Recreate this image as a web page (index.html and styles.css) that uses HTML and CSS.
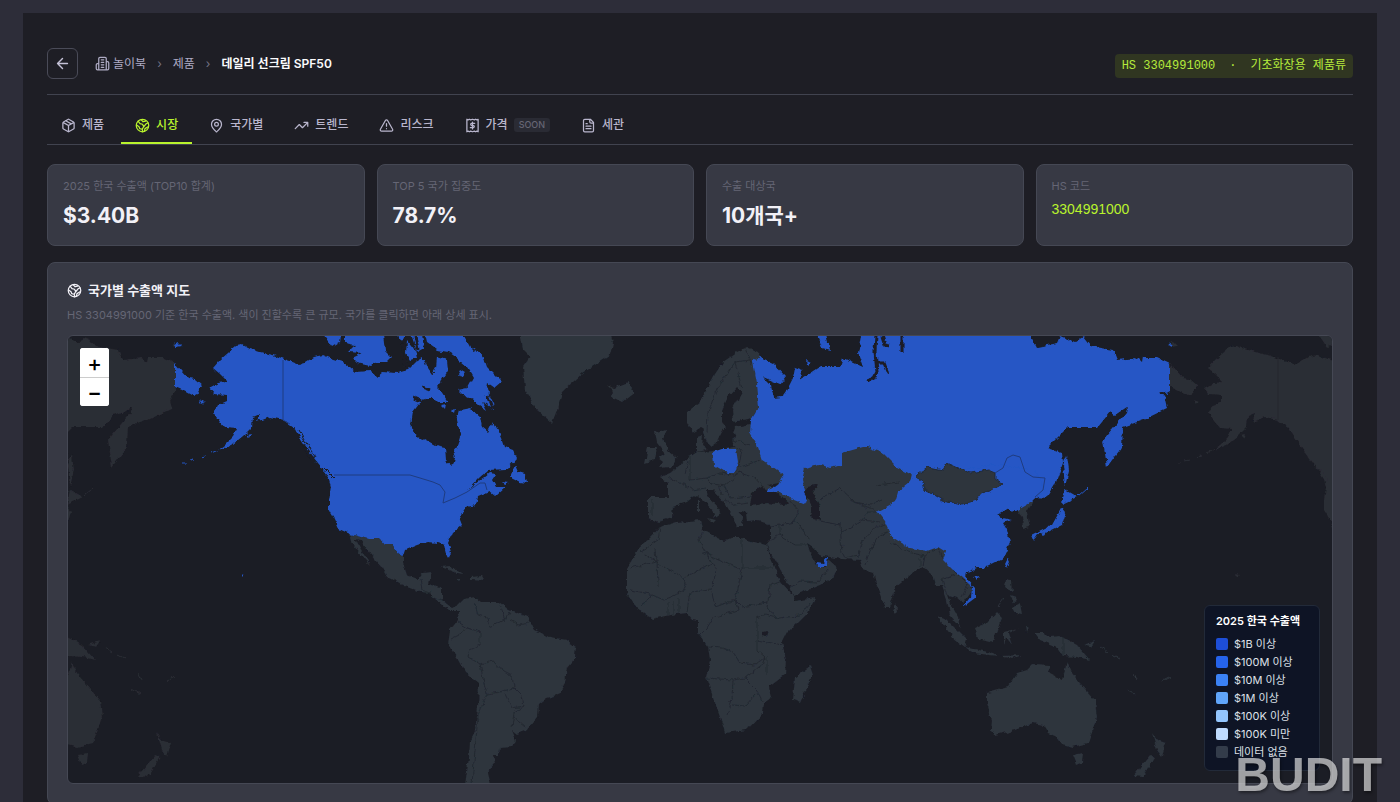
FILE: index.html
```html
<!DOCTYPE html>
<html lang="ko">
<head>
<meta charset="utf-8">
<meta name="viewport" content="width=device-width, initial-scale=1">
<title>데일리 선크림 SPF50 – 시장</title>
<link rel="stylesheet" href="styles.css">
</head>
<body>
<svg class="defs" aria-hidden="true">
  <symbol id="i-earth" viewBox="0 0 24 24"><circle cx="12" cy="12" r="10"/><path d="M5 5l3 4 4 1 2 4-2 3M14 14l4-5 3-1M10 3l3 3 4-1M2.500 11l4 3 1 3 4 1 1 4M15 21l1-4 5-3"/></symbol>
</svg>
<div class="page">
  <main class="shell">
    <header class="header">
      <button class="back" aria-label="뒤로"><svg class="icon" viewBox="0 0 24 24"><path d="M19 12H5M12 19l-7-7 7-7"/></svg></button>
      <nav class="crumbs" aria-label="경로">
        <a href="#" class="crumb"><svg class="icon" viewBox="0 0 24 24"><path d="M6 22V4a2 2 0 0 1 2-2h8a2 2 0 0 1 2 2v18ZM6 12H4a2 2 0 0 0-2 2v6a2 2 0 0 0 2 2h2M18 9h2a2 2 0 0 1 2 2v9a2 2 0 0 1-2 2h-2M10 6h4M10 10h4M10 14h4M10 18h4"/></svg>놀이북</a>
        <span class="sep">›</span>
        <a href="#" class="crumb">제품</a>
        <span class="sep">›</span>
        <span class="current">데일리 선크림 SPF50</span>
      </nav>
      <div class="hs-tag"><span>HS 3304991000</span> <span>·</span> <span>기초화장용 제품류</span></div>
    </header>

    <nav class="tabs" aria-label="제품 상세">
      <a href="#" class="tab"><svg class="icon" viewBox="0 0 24 24"><path d="M11 21.730a2 2 0 0 0 2 0l7-4A2 2 0 0 0 21 16V8a2 2 0 0 0-1-1.730l-7-4a2 2 0 0 0-2 0l-7 4A2 2 0 0 0 3 8v8a2 2 0 0 0 1 1.730zM12 22V12M3.290 7L12 12l8.710-5M7.500 4.270l9 5.150"/></svg>제품</a>
      <a href="#" class="tab active" aria-current="page"><svg class="icon"><use href="#i-earth"/></svg>시장</a>
      <a href="#" class="tab"><svg class="icon" viewBox="0 0 24 24"><path d="M20 10c0 5-5.500 10.200-7.400 11.800a1 1 0 0 1-1.200 0C9.500 20.200 4 15 4 10a8 8 0 0 1 16 0"/><circle cx="12" cy="10" r="3"/></svg>국가별</a>
      <a href="#" class="tab"><svg class="icon" viewBox="0 0 24 24"><path d="M22 7l-8.500 8.500-5-5L2 17M16 7h6v6"/></svg>트렌드</a>
      <a href="#" class="tab"><svg class="icon" viewBox="0 0 24 24"><path d="M21.730 18l-8-14a2 2 0 0 0-3.480 0l-8 14A2 2 0 0 0 4 21h16a2 2 0 0 0 1.730-3M12 9v4M12 17h.01"/></svg>리스크</a>
      <a href="#" class="tab"><svg class="icon" viewBox="0 0 24 24"><path d="M3 2v20l2-1 2 1 2-1 3 1 3-1 2 1 2-1 2 1V2l-2 1-2-1-2 1-3-1-3 1-2-1-2 1ZM15.500 8.500h-5a1.800 1.800 0 0 0 0 3.500h3a1.800 1.800 0 0 1 0 3.500h-5M12 6.500v11"/></svg>가격<span class="soon">SOON</span></a>
      <a href="#" class="tab"><svg class="icon" viewBox="0 0 24 24"><path d="M15 2H6a2 2 0 0 0-2 2v16a2 2 0 0 0 2 2h12a2 2 0 0 0 2-2V7ZM14 2v4a2 2 0 0 0 2 2h4M10 9H8M16 13H8M16 17H8"/></svg>세관</a>
    </nav>

    <section class="stats">
      <div class="stat"><div class="label">2025 한국 수출액 (TOP10 합계)</div><div class="value">$3.40B</div></div>
      <div class="stat"><div class="label">TOP 5 국가 집중도</div><div class="value">78.7%</div></div>
      <div class="stat"><div class="label">수출 대상국</div><div class="value">10개국+</div></div>
      <div class="stat"><div class="label">HS 코드</div><div class="code">3304991000</div></div>
    </section>

    <section class="map-card">
      <h2><svg class="icon"><use href="#i-earth"/></svg>국가별 수출액 지도</h2>
      <p class="desc">HS 3304991000 기준 한국 수출액. 색이 진할수록 큰 규모. 국가를 클릭하면 아래 상세 표시.</p>
      <div class="map">
        <svg class="world" viewBox="68 336 1264 447" role="img" aria-label="세계 지도">
          <defs>
            <filter id="coast" filterUnits="userSpaceOnUse" x="-1000" y="320" width="3400" height="480">
              <feTurbulence type="fractalNoise" baseFrequency="0.16" numOctaves="3" seed="4"/>
              <feDisplacementMap in="SourceGraphic" scale="5" xChannelSelector="R" yChannelSelector="G"/>
            </filter>
            <g id="north-america">
              <path d="M242 345 236 346 228 353 220 360 213 368 220 374 228 382 218 383 209 388 214 394 227 395 227 401 218 405 214 413 220 422 225 428 237 429 233 437 225 445 217 451 232 445 243 436 252 427 253 417 260 414 257 422 270 417 283 420 293 427 300 437 307 448 318 463 328 475 331 487 329 500 329 510 335 520 339 529 350 534 368 539 380 539 385 545 392 544 398 553 403 556 405 550 417 545 427 542 438 543 444 545 446 553 449 559 451 552 448 542 452 533 462 525 459 517 463 513 467 507 476 505 478 497 490 492 495 496 505 487 496 487 492 480 496 474 489 473 480 480 468 490 479 478 488 470 507 469 517 458 513 450 505 447 502 438 498 430 493 422 488 432 482 427 480 417 470 408 460 410 457 420 461 437 458 447 453 449 455 458 453 466 446 460 445 447 435 445 426 440 417 437 411 425 413 412 422 400 432 397 437 402 448 402 441 391 437 387 442 380 448 370 447 360 437 357 436 368 432 375 427 368 423 358 416 362 408 370 397 373 383 372 377 377 370 371 355 372 343 362 330 358 323 355 313 357 300 365 290 361 273 355 260 352 247 348Z"/>
              <path d="M345 334H383L385 350 392 357 387 362 377 362 370 366 357 363 352 358 363 353 348 352 355 345 345 343ZM323 334H341L340 342 332 347ZM407 340 415 350 417 358 410 360 406 353ZM396 334H406L402 343ZM425 334H463L470 347 483 355 487 367 497 377 502 382 495 388 488 383 487 390 493 402 494 410 483 402 487 410 473 400 463 395 458 390 467 388 473 377 467 367 453 355 448 352 437 350 427 343ZM461 370 466 373 462 378 459 374ZM411 334 422 334 424 348 417 352ZM441 405 446 404 445 409ZM451 410 455 409 454 413ZM515 465 510 477 520 482 527 483 525 474 518 472ZM501 482 509 483 504 485ZM326 470 333 480 331 482 324 472ZM246 435 251 434 249 438ZM175 363 188 378 195 379 202 385 197 394 193 396 182 390 175 387ZM174 344 178 342 182 346 176 347ZM198 400 205 402 201 404ZM241 574 244 575 242 577Z"/>
              <path class="isles" d="M217 451 212 453M206 456 202 457M194 460 190 461M186 463 182 463"/>
            </g>
            <g id="chile-side">
              <path d="M350 534 368 539 380 539 385 545 392 544 398 553 403 556 403 563 407 575 418 579 423 572 432 571 429 583 442 588 442 600 452 608 458 605 464 599 475 597 481 602 500 602 510 610 528 617 535 630 550 637 567 640 576 647 575 657 567 667 565 683 558 695 547 698 538 705 537 717 527 730 517 734 512 730 516 740 513 747 500 748 499 755 493 755 495 763 488 772 491 786 465 786 469 757 470 740 475 730 478 707 479 683 465 672 457 657 448 645 450 630 458 620 459 611 450 611 438 602 430 593 420 592 407 587 388 577 382 567 370 553 360 540 355 539 370 565 365 560 353 545ZM440 567 450 566 465 574 457 573 447 569ZM470 577 482 576 485 580 470 579ZM456 580 461 580 459 582Z"/>
              <path d="M520 330 523 350 530 357 523 367 525 390 537 410 552 423 557 410 562 392 583 373 610 355 613 343 610 330ZM607 385 613 388 628 382 635 392 622 402 612 397 613 391Z"/>
            </g>
            <g id="old-world">
              <path d="M747 347 737 352 723 362 713 377 700 402 687 412 687 423 693 433 702 428 705 438 710 447 717 442 722 432 726 427 722 422 722 410 728 397 737 387 742 392 732 410 733 422 752 418 765 400 762 360 758 352ZM697 437 703 435 702 447 707 450 697 452ZM655 432 667 430 663 438 668 450 677 458 672 467 658 468 663 462 658 458 665 453 657 443ZM648 447 657 447 655 460 645 463Z"/>
              <path d="M750 424 735 427 733 432 736 437 732 440 735 447 713 451 697 452 688 458 680 465 670 473 660 477 668 483 668 497 648 497 648 518 658 522 672 517 673 507 687 502 697 495 703 500 715 513 713 518 720 513 718 508 708 497 707 490 713 490 725 503 733 517 737 527 742 527 743 518 738 511 747 512 748 522 757 521 767 523 770 527 770 540 766 545 775 560 790 587 793 596 820 585 832 578 837 567 829 560 826 567 817 565 810 553 807 543 813 547 821 556 830 557 840 559 860 560 863 569 873 572 877 587 885 607 890 607 893 597 895 587 913 572 923 567 932 575 935 585 942 585 947 600 950 615 960 627 958 617 952 606 948 595 957 598 963 603 972 590 960 560 990 500 1018 507 1018 512 1022 517 1023 529 1030 527 1027 512 1033 502 1030 470 900 440 790 440ZM896 604 899 609 896 614 893 610ZM697 500 699 500 699 512 697 512ZM708 518 716 520 713 523Z"/>
              <path d="M766 545 747 540 742 537 733 537 725 542 703 530 700 520 677 522 660 527 650 538 640 546 633 558 627 568 627 593 637 608 652 619 670 615 687 613 692 619 698 620 698 633 708 647 710 660 706 677 713 697 722 723 725 733 747 730 763 713 764 703 771 698 769 687 785 675 786 660 782 643 787 633 807 613 815 598 795 601 792 595 780 582 775 567ZM810 666 813 675 800 703 793 700 795 677Z"/>
              <path d="M937 616 947 620 967 640 965 647 953 638ZM965 647 993 653 998 656 973 653ZM975 628 988 622 997 612 1002 617 998 628 993 642 978 638ZM1004 632 1018 628 1008 633 1012 645 1006 637 1004 646ZM1035 633 1043 633 1050 637 1060 636 1077 645 1090 660 1077 657 1063 656 1057 647 1040 640ZM1006 579 1011 580 1012 592 1005 587ZM1012 608 1020 603 1022 614 1015 613ZM1011 596 1017 598 1014 604ZM1025 626 1028 628 1026 633ZM1083 645 1095 641 1091 647ZM1000 656 1022 655 1012 659ZM987 693 1008 687 1017 673 1027 670 1033 664 1051 665 1048 673 1062 680 1067 662 1072 673 1080 683 1095 700 1097 717 1088 743 1073 747 1062 744 1057 737 1048 733 1043 725 1033 723 1015 730 995 735 991 730 992 720 987 703ZM1073 755 1083 753 1082 763 1077 765ZM1152 733 1157 740 1166 743 1162 757 1157 750ZM1150 755 1155 757 1143 777 1133 776 1140 767Z"/>
              <path class="isles" d="M1100 647 1108 652M1112 655 1120 659M1127 689 1135 694M1134 673 1137 680M1162 681 1170 677M998 606 1004 598"/>
            </g>
            <g id="asia-north">
              <path d="M753 362 757 383 759 407 751 420 750 433 757 445 762 460 773 467 784 475 778 485 768 489 767 493 778 491 790 498 805 504 807 497 802 480 805 468 817 464 830 468 842 465 842 453 863 447 867 447 883 453 897 467 912 475 928 467 943 470 947 463 970 473 988 470 1000 470 1035 497 1047 498 1055 485 1063 463 1062 453 1047 448 1068 427 1098 427 1110 412 1115 415 1127 407 1126 412 1103 440 1107 467 1115 456 1122 447 1123 427 1143 420 1168 408 1165 395 1170 392 1170 363 1157 357 1143 357 1142 363 1137 358 1117 360 1113 350 1090 346 1083 337 1075 342 1060 336 1057 343 1037 347 1028 330 862 330 858 353 863 367 843 358 840 367 820 367 808 375 800 380 803 370 795 367 793 378 787 390 782 397 773 398 770 385 763 378 780 385 786 377 773 363 760 357ZM815 330H825L830 350 822 348ZM807 360 811 362 808 365ZM1067 455 1069 470 1065 487 1063 465ZM1167 345 1171 343 1173 347Z"/>
              <path d="M912 474 910 482 898 492 895 502 877 512 885 522 892 537 910 548 927 551 938 547 946 552 943 560 953 570 962 577 972 587 971 596 963 607 975 598 975 588 966 578 967 572 977 568 983 568 1003 558 1010 543 1007 530 1003 523 1012 520 1003 518 998 514 1008 508 1012 512 1018 510 1032 502 1045 490 1035 470 995 465 960 470 925 470ZM1008 558 1010 562 1007 568 1005 564ZM973 577 980 576 976 580ZM1065 490 1077 497 1062 504ZM1062 507 1066 512 1062 525 1048 532 1038 534 1034 540 1032 535 1052 525ZM1041 534 1047 532 1044 536Z"/>
              <path class="isles" d="M1078 496 1088 487"/>
            </g>
          </defs>
          <g class="wrap" filter="url(#coast)">
            <use href="#asia-north" x="-995"/><use href="#old-world" x="-995"/>
            <use href="#north-america" x="995"/><use href="#chile-side" x="995"/>
          </g>
          <path class="edge" d="M1278 357V420"/>
          <g class="land" filter="url(#coast)"><use href="#chile-side"/><use href="#old-world"/></g>
          <g class="borders" filter="url(#coast)">
            <path d="M458 622 468 628 480 632 480 645 470 650 468 657 480 664 494 661 504 672 512 676 514 688 522 696 524 706 514 712 512 728M480 664 484 683 487 694 500 692 514 688M487 694 478 715 476 740 472 783M475 603 478 615 488 618 490 627 506 618 510 612M510 620 518 625 530 623M451 639 459 635 467 628M500 605 505 620M505 694 512 708 524 706M514 717 526 727M420 580 422 590 432 594M435 598 443 600"/>
            <path d="M660 527 658 540 640 552M655 548 656 562 630 568M640 552 683 578 686 585 682 592 664 600 650 594 630 590M657 560 658 586M683 578 712 564 699 540 703 530M712 564 716 570 712 590 690 592 687 612M702 552 742 570 742 537M742 568H773M742 570 737 592 735 600 715 607 712 592M735 600 742 607 768 602 770 585 780 582M768 602 767 608 778 618 800 616 810 602M735 600 738 610 712 618 706 628 700 634M757 618V650L765 657 762 665M757 618 765 615 778 618M757 640 782 645M708 647 722 648 733 652 740 663 755 665 765 657M733 680 706 678M733 680 732 700 727 715M733 680 745 678 757 690 762 702M733 705 745 706 755 695M668 601V615M673 600V614M679 598V612M650 594 648 600 640 606M767 657V675M745 678 762 665"/>
            <path d="M707 433 708 412 720 385 735 362 750 360M745 348 752 365M735 362 742 388M732 440 750 445M735 447 742 450 738 470M760 460 738 468M668 478 685 485 692 490 706 488M690 455 690 480 708 478 720 473 735 475 741 472M688 460 685 475M708 478 712 484 725 486 735 478M725 486 730 498 752 496M740 473 755 478 762 486M725 500 735 505 748 503M652 500 652 516M718 485 722 495M770 527 780 525 795 522 798 510 790 500M780 525 780 535 770 540M797 522 810 540M780 535 795 545 808 545M815 520 840 525 842 552 845 558M842 532 862 520 880 522M820 500 840 488 855 502 870 505 882 500M850 500 875 510M862 520 868 512 877 512M845 558 858 555 862 540 875 528 885 524M865 565 870 550 880 535 888 532M890 542 908 552 925 556 930 552M925 556 923 566M932 552 938 548 944 560 955 572 968 585 962 597M948 595 942 580 955 575M920 557V567M790 587 800 581 818 582 828 570M876 485 900 482M1063 637V656"/>
          </g>
          <g class="export" filter="url(#coast)">
            <use href="#north-america"/><use href="#asia-north"/>
            <path d="M713 452 722 449 736 449 738 462 735 473 727 473 714 465ZM817 562 823 563 828 557 827 566 818 566Z"/>
          </g>
          <path class="land outlined" filter="url(#coast)" d="M915 476 928 467 943 470 947 463 970 473 988 470 995 473 995 480 1004 483 992 490 982 493 977 500 963 504 942 500 925 490 923 482Z"/>
          <path class="sea" filter="url(#coast)" d="M752 493 763 486 767 492 775 492 788 502 785 505 767 503 750 505ZM807 487 818 484 813 493 820 507 820 520 810 517 812 507 804 493ZM768 485 779 483 775 487ZM762 632 768 631 766 637 762 636Z"/>
          <path class="inlet" filter="url(#coast)" d="M876 334 875 352 877 372 873 379 867 381M877 363 884 363 888 373M882 336 885 345 890 346M902 336 902 352M415 336 418 350M404 345 402 358 409 368M430 390 422 387M414 398 421 401M487 395 492 408M1160 393 1166 394"/>
          <path class="fjords" filter="url(#coast)" d="M294 427 302 444 311 460M299 430 308 446 316 458M323 467 334 478"/>
          <path class="edge" d="M283 360V420L290 424M334 475H410L420 478 433 482 440 485 445 492 443 503 455 498 467 492 480 483 485 483 487 490M995 473 1003 468 1007 458 1013 455 1020 457 1025 472 1033 477 1045 478 1043 490 1035 497"/>
        </svg>
        <div class="zoomer"><button aria-label="확대">+</button><button aria-label="축소">−</button></div>
        <aside class="legend">
          <h3>2025 한국 수출액</h3>
          <ul>
            <li><i class="sw c1"></i>$1B 이상</li>
            <li><i class="sw c2"></i>$100M 이상</li>
            <li><i class="sw c3"></i>$10M 이상</li>
            <li><i class="sw c4"></i>$1M 이상</li>
            <li><i class="sw c5"></i>$100K 이상</li>
            <li><i class="sw c6"></i>$100K 미만</li>
            <li><i class="sw c7"></i>데이터 없음</li>
          </ul>
        </aside>
      </div>
    </section>
  </main>
  <div class="watermark">BUDIT</div>
</div>
</body>
</html>
```
FILE: styles.css
```css
* { box-sizing: border-box; }
body {
  margin: 0;
  background: #2d2d39;
  color: #f2f1f7;
  font-family: Inter, "Noto Sans CJK KR", sans-serif;
  font-size: 12px;
  line-height: 16px;
}
a { color: inherit; text-decoration: none; }
button { font: inherit; cursor: pointer; }
.defs { position: absolute; width: 0; height: 0; }
.icon {
  width: 15px;
  height: 15px;
  flex: none;
  fill: none;
  stroke: currentColor;
  stroke-width: 2;
  stroke-linecap: round;
  stroke-linejoin: round;
}
.page { position: relative; height: 100vh; overflow: hidden; padding: 13px 23px 0; }
.shell { min-height: 100%; background: #1e1e25; padding: 35px 24px 0; }

.header {
  display: flex;
  align-items: center;
  padding-bottom: 15px;
  border-bottom: 1px solid #41434f;
}
.back {
  display: grid;
  place-items: center;
  width: 31px;
  height: 31px;
  padding: 0;
  border: 1px solid #4a4b58;
  border-radius: 6px;
  background: none;
  color: #c4c1d6;
}
.back .icon { width: 17px; height: 17px; }
.crumbs { display: flex; align-items: center; gap: 11px; margin-left: 17px; color: #aeabc4; }
.crumb { display: flex; align-items: center; gap: 3px; }
.sep { color: #747384; }
.current { color: #fbfbfd; font-weight: 600; }
.hs-tag {
  display: flex;
  gap: 14px;
  margin: 5px 0 0 auto;
  padding: 4px 7px;
  border-radius: 4px;
  background: #303621;
  color: #b5ea3c;
  font-family: "Liberation Mono", "Noto Sans CJK KR", monospace;
}

.tabs { display: flex; gap: 3px; border-bottom: 1px solid #41434f; }
.tab {
  display: flex;
  align-items: center;
  gap: 6px;
  padding: 22px 14px 9px;
  border-bottom: 2px solid transparent;
  color: #b9b6cd;
  font-weight: 500;
}
.tab.active { color: #b9f32d; border-color: #b9f32d; }
.soon {
  padding: 0 5px;
  border-radius: 3px;
  background: #2a2b34;
  color: #666675;
  font-size: 9px;
  line-height: 14px;
}

.stats { display: grid; grid-template-columns: repeat(4, 1fr); gap: 12px; margin-top: 19px; }
.stat {
  min-height: 82px;
  padding: 13px 15px;
  border: 1px solid #454854;
  border-radius: 8px;
  background: #373944;
}
.label { color: #656675; font-size: 11px; }
.value { margin-top: 8px; font-size: 21px; font-weight: 700; line-height: 28px; }
.code { margin-top: 5px; color: #b9f32d; font-family: "Liberation Sans", sans-serif; font-size: 14px; line-height: 20px; }

.map-card {
  margin-top: 16px;
  padding: 19px 19px 20px;
  border: 1px solid #454854;
  border-radius: 8px;
  background: #373944;
}
.map-card h2 { display: flex; align-items: center; gap: 6px; margin: 0; font-size: 13px; font-weight: 600; line-height: 16px; }
.desc { margin: 9px 0 12px; color: #656675; font-size: 11px; line-height: 16px; }
.map {
  position: relative;
  overflow: hidden;
  border: 1px solid #454854;
  border-radius: 6px;
  background: #1b1d25;
}
.world { display: block; width: 100%; aspect-ratio: 1264 / 447; }
.wrap { fill: #2b2d35; stroke: #2b2d35; stroke-width: 0; }
.land { fill: #2d343d; stroke: #2d343d; stroke-width: 0; }
.export { fill: #2557c5; stroke: #2557c5; stroke-width: 0; }
.isles { fill: none; stroke-width: 1; }
.outlined { stroke: #222a38; stroke-width: 1; }
.sea { fill: #1b1d25; }
.inlet { fill: none; stroke: #1b1d25; stroke-width: 3; }
.fjords { fill: none; stroke: #1b1d25; stroke-width: 1; }
.borders { fill: none; stroke: #222831; stroke-width: 1; }
.edge { fill: none; stroke: #1f3c80; stroke-width: 1; }
.wrap + .edge { stroke: #25272f; }

.zoomer {
  position: absolute;
  top: 12px;
  left: 12px;
  display: grid;
  border-radius: 3px;
  overflow: hidden;
  background: #fff;
}
.zoomer button {
  width: 29px;
  height: 29px;
  padding: 0;
  border: 0;
  background: #fff;
  color: #000;
  font-size: 22px;
  font-weight: 500;
  line-height: 28px;
}
.zoomer button + button { border-top: 1px solid #ccc; }
.legend {
  position: absolute;
  right: 12px;
  bottom: 12px;
  width: 116px;
  padding: 7px 11px 9px;
  border: 1px solid #222a39;
  border-radius: 6px;
  background: #0e1425;
  color: #dde0e8;
  font-size: 11px;
}
.legend h3 { margin: 0 0 6px; color: #fff; font-size: 11px; font-weight: 600; line-height: 16px; }
.legend ul { margin: 0; padding: 0; list-style: none; }
.legend li { display: flex; align-items: center; gap: 6px; height: 18px; line-height: 18px; }
.sw { width: 12px; height: 12px; border-radius: 2px; }
.c1 { background: #1d4ed8; }
.c2 { background: #2563eb; }
.c3 { background: #3b82f6; }
.c4 { background: #60a5fa; }
.c5 { background: #93c5fd; }
.c6 { background: #bfdbfe; }
.c7 { background: #333c4a; }
.watermark {
  position: absolute;
  right: 18px;
  bottom: 0;
  color: rgba(255, 255, 255, 0.6);
  font-family: "Liberation Sans", sans-serif;
  font-size: 48px;
  font-weight: 700;
  line-height: 54px;
  text-shadow: 1px 2px 3px rgba(0, 0, 0, 0.4);
}
```
